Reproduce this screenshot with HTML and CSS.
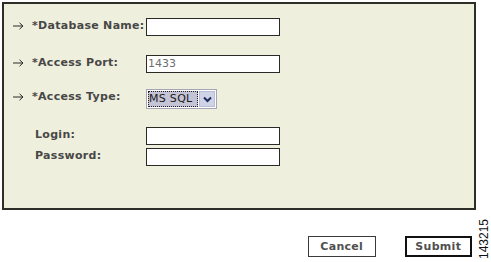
FILE: index.html
```html
<!DOCTYPE html>
<html lang="en">
  <head>
    <meta charset="UTF-8" />
    <title>Database Settings</title>
    <link rel="stylesheet" href="styles.css">
  </head>
  <body>
    <div class="panel">
      <div class="form-grid">
        <span class="arrow">
          <svg width="11" height="8" viewBox="0 0 11 8"><path d="M0 4 H10 M6.5 0.8 L10 4 L6.5 7.2" fill="none" stroke="#2a2a2a" stroke-width="1"/></svg>
        </span>
        <label class="field-label">*Database Name:</label>
        <div class="text-input"></div>

        <span class="arrow">
          <svg width="11" height="8" viewBox="0 0 11 8"><path d="M0 4 H10 M6.5 0.8 L10 4 L6.5 7.2" fill="none" stroke="#2a2a2a" stroke-width="1"/></svg>
        </span>
        <label class="field-label">*Access Port:</label>
        <div class="text-input">1433</div>

        <span class="arrow">
          <svg width="11" height="8" viewBox="0 0 11 8"><path d="M0 4 H10 M6.5 0.8 L10 4 L6.5 7.2" fill="none" stroke="#2a2a2a" stroke-width="1"/></svg>
        </span>
        <label class="field-label">*Access Type:</label>
        <div class="select">
          <span class="select__value">MS SQL</span>
          <span class="select__button">
            <svg width="9" height="7" viewBox="0 0 9 7">
              <path d="M1 1.5 L4.5 5 L8 1.5" fill="none" stroke="#1c2a5a" stroke-width="2"/>
            </svg>
          </span>
        </div>

        <span></span>
        <label class="field-label field-label--plain">Login:</label>
        <div class="text-input"></div>

        <span></span>
        <label class="field-label field-label--plain">Password:</label>
        <div class="text-input"></div>
      </div>
    </div>

    <div class="footer">
      <div class="button">Cancel</div>
      <div class="button button--primary">Submit</div>
      <span class="figure-id">143215</span>
    </div>
  </body>
</html>
```

FILE: styles.css
```css
* {
  margin: 0;
  padding: 0;
  box-sizing: border-box;
}

body {
  width: 491px;
  height: 262px;
  background: #ffffff;
  font-family: "DejaVu Sans", Verdana, sans-serif;
  font-size: 11px;
  color: #474747;
}

.panel {
  margin: 2px 0 0 2px;
  width: 474px;
  height: 208px;
  border: 2px solid #2e2e28;
  background: #efefdd;
  padding: 14px 0 0 6px;
}

.form-grid {
  display: grid;
  grid-template-columns: 22px 114px 134px;
  grid-template-rows: 37px 34px 38px 21px 18px;
  align-items: start;
}

.arrow {
  display: flex;
  padding: 4px 0 0 3px;
}

.field-label {
  font-weight: bold;
  line-height: 14px;
  padding-top: 1px;
  letter-spacing: 0.3px;
  white-space: nowrap;
}

.field-label--plain {
  padding-left: 3px;
}

.text-input {
  width: 134px;
  height: 18px;
  border: 1px solid #2a2a26;
  background: #ffffff;
  font-size: 11px;
  line-height: 16px;
  padding-left: 1px;
  color: #6e6e6e;
}

.select {
  display: flex;
  width: 71px;
  height: 20px;
  border: 1px solid #a5a5b5;
  background: #ffffff;
  padding: 1px;
}

.select__value {
  flex: 1;
  background: #c4c4d6;
  outline: 1px dotted #222;
  outline-offset: -1px;
  font-size: 11px;
  line-height: 16px;
  padding-left: 1px;
  letter-spacing: 0.3px;
  color: #1a1a1a;
  margin-right: 1px;
}

.select__button {
  width: 16px;
  display: flex;
  align-items: center;
  justify-content: center;
  background: #cfd3e8;
  border: 1px solid #b6bcd6;
}

.footer {
  display: flex;
  align-items: flex-end;
  height: 52px;
  padding-left: 308px;
}

.button {
  width: 68px;
  height: 21px;
  border: 1px solid #3a3a3a;
  font-weight: bold;
  text-align: center;
  line-height: 19px;
  letter-spacing: 0.3px;
  color: #505050;
  margin-bottom: 5px;
}

.button--primary {
  margin-left: 29px;
  border: 2px solid #111;
  line-height: 17px;
}

.figure-id {
  writing-mode: vertical-rl;
  transform: rotate(180deg);
  font-family: "Liberation Sans", Arial, sans-serif;
  font-size: 12px;
  color: #111;
  margin-left: 5px;
  margin-bottom: 3px;
}
```
